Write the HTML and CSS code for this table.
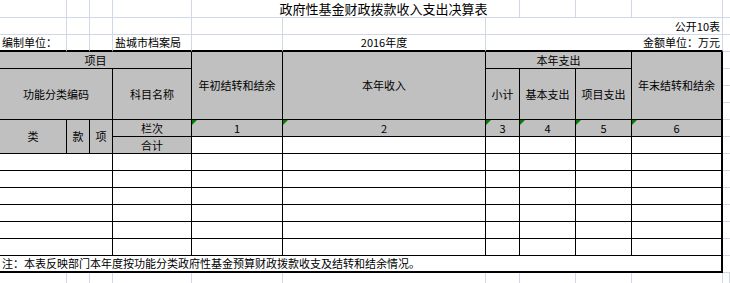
FILE: index.html
```html
<!DOCTYPE html>
<html lang="zh-CN">
<head>
<meta charset="utf-8">
<title>政府性基金财政拨款收入支出决算表</title>
<link rel="stylesheet" href="styles.css">
</head>
<body>
<div class="sheet">
  <!-- row 1 -->
  <div class="c"></div><div class="c"></div><div class="c"></div><div class="c"></div>
  <div class="c title cs3">政府性基金财政拨款收入支出决算表</div>
  <div class="c"></div><div class="c"></div><div class="c"></div><div class="e"></div>
  <!-- row 2 -->
  <div class="c"></div><div class="c"></div><div class="c"></div><div class="c"></div><div class="c"></div><div class="c"></div>
  <div class="c cs4 right">公开10表</div><div class="e"></div>
  <!-- row 3 -->
  <div class="c top left">编制单位：</div><div class="c top"></div><div class="c top"></div>
  <div class="c top left">盐城市档案局</div><div class="c top"></div>
  <div class="c top">2016年度</div>
  <div class="c top cs4 right">金额单位：万元</div><div class="e"></div>
  <!-- row 4 -->
  <div class="t g cs4">项目</div>
  <div class="t g rs4">年初结转和结余</div>
  <div class="t g rs4">本年收入</div>
  <div class="t g cs3">本年支出</div>
  <div class="t g rs4 last">年末结转和结余</div><div class="e"></div>
  <!-- row 5-7 -->
  <div class="t g cs3 rs3">功能分类编码</div>
  <div class="t g rs3">科目名称</div>
  <div class="t g rs3">小计</div>
  <div class="t g rs3">基本支出</div>
  <div class="t g rs3">项目支出</div><div class="e"></div>
  <div class="e"></div>
  <div class="e"></div>
  <!-- row 8 -->
  <div class="t g rs2">类</div><div class="t g rs2">款</div><div class="t g rs2">项</div>
  <div class="t g">栏次</div>
  <div class="t g tri">1</div><div class="t g tri">2</div><div class="t g tri">3</div>
  <div class="t g tri">4</div><div class="t g tri">5</div><div class="t g tri last">6</div><div class="e"></div>
  <!-- row 9 -->
  <div class="t g">合计</div>
  <div class="t"></div><div class="t"></div><div class="t"></div><div class="t"></div><div class="t"></div><div class="t last"></div><div class="e"></div>
  <!-- rows 10-15 -->
  <div class="t cs3"></div><div class="t"></div><div class="t"></div><div class="t"></div><div class="t"></div><div class="t"></div><div class="t"></div><div class="t last"></div><div class="e"></div>
  <div class="t cs3"></div><div class="t"></div><div class="t"></div><div class="t"></div><div class="t"></div><div class="t"></div><div class="t"></div><div class="t last"></div><div class="e"></div>
  <div class="t cs3"></div><div class="t"></div><div class="t"></div><div class="t"></div><div class="t"></div><div class="t"></div><div class="t"></div><div class="t last"></div><div class="e"></div>
  <div class="t cs3"></div><div class="t"></div><div class="t"></div><div class="t"></div><div class="t"></div><div class="t"></div><div class="t"></div><div class="t last"></div><div class="e"></div>
  <div class="t cs3"></div><div class="t"></div><div class="t"></div><div class="t"></div><div class="t"></div><div class="t"></div><div class="t"></div><div class="t last"></div><div class="e"></div>
  <div class="t cs3"></div><div class="t"></div><div class="t"></div><div class="t"></div><div class="t"></div><div class="t"></div><div class="t"></div><div class="t last"></div><div class="e"></div>
  <!-- row 16 note -->
  <div class="t cs10 last bottom left">注：本表反映部门本年度按功能分类政府性基金预算财政拨款收支及结转和结余情况。</div><div class="e"></div>
  <!-- row 17 -->
  <div class="f"></div><div class="f"></div><div class="f"></div><div class="f"></div><div class="f"></div><div class="f"></div><div class="f"></div><div class="f"></div><div class="f"></div><div class="f"></div><div class="f"></div>
</div>
</body>
</html>
```
FILE: styles.css
```css
html, body {
  margin: 0;
  padding: 0;
  background: #ffffff;
  overflow: hidden;
}

.sheet {
  display: grid;
  grid-template-columns: 67px 23px 23px 79px 91px 203px 34px 56px 56px 91px 7px;
  grid-template-rows: 18px repeat(15, 17px) 11px;
  font-family: "Noto Sans CJK SC", "Liberation Sans", sans-serif;
  font-size: 11px;
  color: #000000;
}

.c, .t, .e, .f {
  box-sizing: border-box;
  display: flex;
  align-items: center;
  justify-content: center;
  white-space: nowrap;
  overflow: visible;
  line-height: 1;
  position: relative;
}

.c {
  border-right: 1px solid #d0d7e5;
  border-bottom: 1px solid #d0d7e5;
}

.e {
  border-bottom: 1px solid #d0d7e5;
}

.f {
  border-right: 1px solid #d0d7e5;
}

.t {
  border-right: 1px solid #000000;
  border-bottom: 1px solid #000000;
  background: #ffffff;
}

.g {
  background: #c0c0c0;
}

.top {
  border-bottom: 2px solid #000000;
}

.bottom {
  border-bottom: 2px solid #000000;
}

.last {
  border-right: 2px solid #000000;
}

.left {
  justify-content: flex-start;
  padding-left: 2px;
}

.right {
  justify-content: flex-end;
  padding-right: 2px;
}

.title {
  font-size: 13px;
  padding-left: 56px;
}

.cs3 { grid-column: span 3; }
.cs4 { grid-column: span 4; }
.cs10 { grid-column: span 10; }
.rs2 { grid-row: span 2; }
.rs3 { grid-row: span 3; }
.rs4 { grid-row: span 4; }

.tri::before {
  content: "";
  position: absolute;
  left: 0;
  top: 0;
  width: 0;
  height: 0;
  border-top: 5px solid #008000;
  border-right: 5px solid transparent;
}
```
